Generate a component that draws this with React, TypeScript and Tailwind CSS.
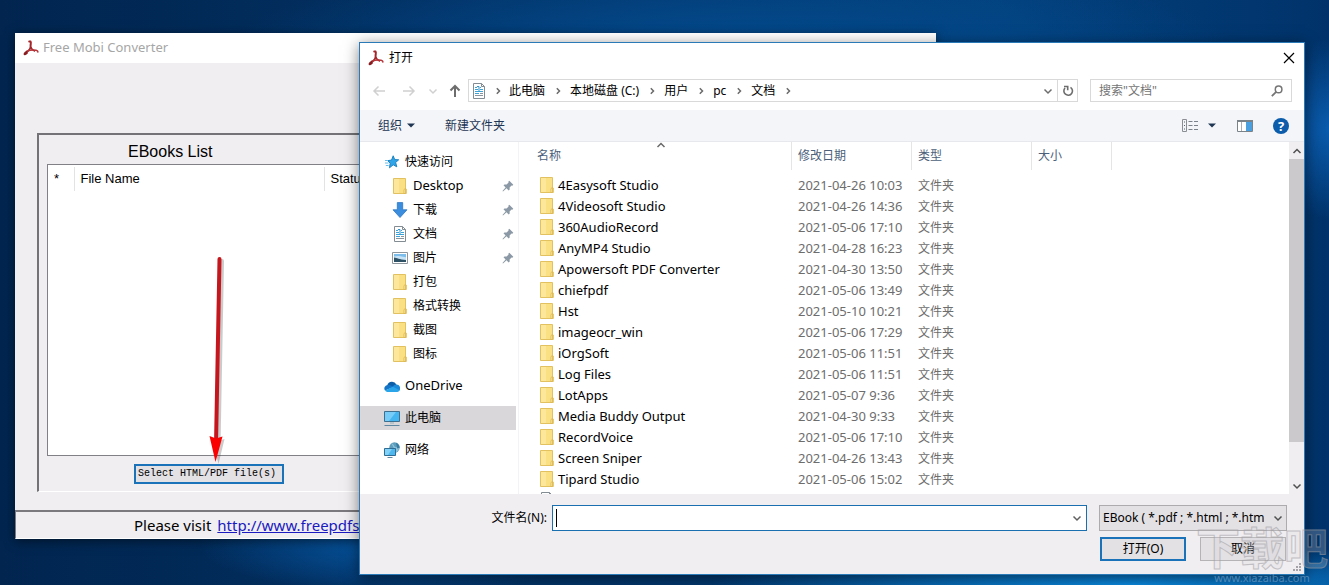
import React from "react";
import clsx from "clsx";

type IconProps = { className?: string };

type SideItem = {
  label: string;
  icon: (p: IconProps) => React.ReactElement;
  pinned?: boolean;
  latin?: boolean;
};

/* ---------- icons ---------- */

function PdfLogo({ className }: IconProps) {
  return (
    <svg viewBox="0 0 16 16" className={clsx("shrink-0", className)} fill="none" aria-hidden="true">
      <path d="M6.200 1.500h1.300c.8.900.2 2.500.1 3.700-.1 1 0 1.800.2 2.600" stroke="#a3262a" strokeWidth="2" strokeLinecap="round" />
      <path d="M7.700 7.300C7.200 9 5.500 10.800 4 12.200" stroke="#a3262a" strokeWidth="1.700" />
      <path d="M7.700 7.300c1 1.800 2.600 3.300 4.300 4" stroke="#a3262a" strokeWidth="1.700" />
      <path d="M4 11.200c2.500-1 6-1.500 9-.9 1.500.4 2 1 1.800 1.700" stroke="#b5353a" strokeWidth="1.500" strokeLinecap="round" />
      <path d="M4.300 11.400c-1.300.7-2.500 1.600-2.800 2.700.8.400 2-.4 2.900-1.600" stroke="#8a1c20" strokeWidth="1.900" strokeLinejoin="round" />
    </svg>
  );
}

function FolderIcon({ className }: IconProps) {
  return (
    <svg viewBox="0 0 14 16" className={clsx("shrink-0", className)} aria-hidden="true">
      <path d="M.5.5h12v10.500h.8v4.500H.5z" fill="#fbe083" stroke="#e2c160" />
      <path d="M1 1h5v14H1z" fill="#fde79a" />
      <path d="M11 15.500v-4l1.500-1v5z" fill="#fff0b5" stroke="#d9b44c" strokeWidth=".8" />
    </svg>
  );
}

function StarIcon({ className }: IconProps) {
  return (
    <svg viewBox="0 0 14 14" className={clsx("shrink-0", className)} aria-hidden="true">
      <path d="M8.200.800 9.700 4.600l4 .2-3.100 2.700 1.200 4.300-3.600-2-3.700 3 .700-4.600L2.800 5.700l3.800-.7z" fill="#2fa4e7" stroke="#1b83c4" strokeWidth="1" />
      <path d="M0 5.500h2.500M0 8h3.500M.8 10.500h2.800" stroke="#55b4ea" strokeWidth=".9" />
    </svg>
  );
}

function DownloadIcon({ className }: IconProps) {
  return (
    <svg viewBox="0 0 16 16" className={clsx("shrink-0", className)} aria-hidden="true">
      <path d="M5.300.600h5.400v7.200h4.300L8 15.500 1 7.800h4.300z" fill="#3b8ede" stroke="#2c76c4" strokeWidth=".8" />
    </svg>
  );
}

function DocumentIcon({ className }: IconProps) {
  return (
    <svg viewBox="0 0 14 16" className={clsx("shrink-0", className)} fill="none" aria-hidden="true">
      <path d="M1.500.5h8l3 3v12h-11z" fill="#fff" stroke="#838b93" />
      <path d="M9.500.5v3h3" stroke="#838b93" />
      <path d="M3 6.500h3M8 6.500h3M3 8.500h8M3 10.500h4" stroke="#3ba3d8" />
      <path d="M5 3.500h2v5" stroke="#2f93cc" />
      <path d="M3 4.500h2M8 4.500h1" stroke="#3ba3d8" />
      <path d="M8 10.500h3M3 12.500h8" stroke="#8a949c" />
    </svg>
  );
}

function PictureIcon({ className }: IconProps) {
  return (
    <svg viewBox="0 0 16 12" className={clsx("shrink-0", className)} aria-hidden="true">
      <path d="M.5.5h15v11H.5z" fill="#fff" stroke="#8d959d" />
      <path d="M2 2h12v8H2z" fill="#7dbdec" />
      <path d="M2 4.500c3-1 5-.5 12 .8V8H2z" fill="#c7e3f5" />
      <path d="M2 5.500c3 .4 5 2 12 2.500v2H2z" fill="#2e5166" />
    </svg>
  );
}

function OneDriveIcon({ className }: IconProps) {
  return (
    <svg viewBox="0 0 16 11" className={clsx("shrink-0", className)} aria-hidden="true">
      <path d="M3.300 4.200A4.900 4.900 0 0 1 12.400 3.500L9.500 8z" fill="#0c5ea8" />
      <path d="M3.400 4A3.500 3.500 0 0 0 1 9.500L9.800 6 6.200 4.200A4 4 0 0 0 3.400 4z" fill="#1475c8" />
      <path d="M12.300 3.600A3.700 3.700 0 0 1 15 10L8 6.500l1.500-1.800a4 4 0 0 1 2.800-1.100z" fill="#1a8ad8" />
      <path d="M1 9.600 8.800 5.800l6.800 3.500a2.700 2.700 0 0 1-2.300 1.600H3.300A3.300 3.300 0 0 1 1 9.600z" fill="#2aa5ea" />
    </svg>
  );
}

function ComputerIcon({ className }: IconProps) {
  return (
    <svg viewBox="0 0 16 15" className={clsx("shrink-0", className)} aria-hidden="true">
      <path d="M.5.5h15v10H.5z" fill="#45b5f2" stroke="#3f6f8f" />
      <path d="M1 1h11L5 10H1z" fill="#77cdf8" />
      <path d="M6 11h4v2H6z" fill="#b9c3ca" />
      <path d="M.5 14.500h15" stroke="#5f87a1" />
    </svg>
  );
}

function NetworkIcon({ className }: IconProps) {
  return (
    <svg viewBox="0 0 16 16" className={clsx("shrink-0", className)} aria-hidden="true">
      <circle cx="10.500" cy="5.500" r="5.200" fill="#5f9dbd" />
      <path d="M7.500 1.500c2.500.5 2 2.500 3.500 3.500s2-1 4-.5c0 3-1 5-3 5.800z" fill="#8fc3da" />
      <path d="M12 .800c2.200.9 3.500 2.700 3.600 4.900l-2.400.8z" fill="#377ca3" />
      <path d="M.5 6.500h11v7H.5z" fill="#4db7ee" stroke="#2f6d94" />
      <path d="M1 7h7l-4 6H1z" fill="#82d1f8" />
      <path d="M3.500 15.500h5" stroke="#5f87a1" />
    </svg>
  );
}

function PinIcon({ className }: IconProps) {
  return (
    <svg viewBox="0 0 12 12" className={clsx("shrink-0", className)} aria-hidden="true">
      <path d="m7.300.8 4 4-1 .9-.8-.3-1.900 2 .1 2.100-1 1L4.500 8.300 1 11.400l-.5-.4 3.100-3.500-2.100-2.200 1-.9 2.100.1 2-1.900-.3-.9z" fill="#8b98a5" />
    </svg>
  );
}

function Chevron({ dir, className }: { dir: "up" | "down" | "right"; className?: string }) {
  const d = { up: "M1.500 7 5 3.500 8.500 7", down: "M1.500 3.500 5 7l3.500-3.500", right: "M3.800 2.300 6.500 5 3.800 7.700" }[dir];
  return (
    <svg viewBox="0 0 10 10" className={clsx("h-[10px] w-[10px] shrink-0", className)} fill="none" aria-hidden="true">
      <path d={d} stroke="currentColor" strokeWidth="1.500" />
    </svg>
  );
}

function ArrowIcon({ dir, className }: { dir: "left" | "right" | "up"; className?: string }) {
  const d = {
    left: "M13 7H2M6.500 2.500 2 7l4.500 4.500",
    right: "M1 7h11M7.500 2.500 12 7l-4.500 4.500",
    up: "M7 13V2M2.500 6.500 7 2l4.500 4.500",
  }[dir];
  return (
    <svg viewBox="0 0 14 14" className={clsx("h-[14px] w-[14px]", className)} fill="none" aria-hidden="true">
      <path d={d} stroke="currentColor" strokeWidth={dir === "up" ? 2 : 1.5} />
    </svg>
  );
}

function Caret() {
  return (
    <svg viewBox="0 0 8 5" className="h-[5px] w-[8px]" aria-hidden="true">
      <path d="M0 .5h8l-4 4z" fill="#1e3553" />
    </svg>
  );
}

/* ---------- data ---------- */

const quickAccess: SideItem[] = [
  { label: "Desktop", icon: FolderIcon, pinned: true, latin: true },
  { label: "下载", icon: DownloadIcon, pinned: true },
  { label: "文档", icon: DocumentIcon, pinned: true },
  { label: "图片", icon: PictureIcon, pinned: true },
  { label: "打包", icon: FolderIcon },
  { label: "格式转换", icon: FolderIcon },
  { label: "截图", icon: FolderIcon },
  { label: "图标", icon: FolderIcon },
];

const places: SideItem[] = [
  { label: "OneDrive", icon: OneDriveIcon, latin: true },
  { label: "此电脑", icon: ComputerIcon },
  { label: "网络", icon: NetworkIcon },
];

const crumbs = ["此电脑", "本地磁盘 (C:)", "用户", "pc", "文档"];

const files: [string, string][] = [
  ["4Easysoft Studio", "2021-04-26 10:03"],
  ["4Videosoft Studio", "2021-04-26 14:36"],
  ["360AudioRecord", "2021-05-06 17:10"],
  ["AnyMP4 Studio", "2021-04-28 16:23"],
  ["Apowersoft PDF Converter", "2021-04-30 13:50"],
  ["chiefpdf", "2021-05-06 13:49"],
  ["Hst", "2021-05-10 10:21"],
  ["imageocr_win", "2021-05-06 17:29"],
  ["iOrgSoft", "2021-05-06 11:51"],
  ["Log Files", "2021-05-06 11:51"],
  ["LotApps", "2021-05-07 9:36"],
  ["Media Buddy Output", "2021-04-30 9:33"],
  ["RecordVoice", "2021-05-06 17:10"],
  ["Screen Sniper", "2021-04-26 13:43"],
  ["Tipard Studio", "2021-05-06 15:02"],
];

/* ---------- converter window ---------- */

function ConverterWindow() {
  return (
    <section className="absolute top-[33px] right-[393px] left-[15px] flex flex-col bg-[#f0eef1] shadow-[0_2px_10px_rgba(0,0,0,0.5)]">
      <header className="flex h-[30px] items-center gap-1 bg-white pl-2 text-[13px] text-[#a6a6a6]">
        <PdfLogo className="h-4 w-4" />
        <h1>Free Mobi Converter</h1>
      </header>

      <div className="mt-[70px] mr-5 ml-[22px] flex flex-col border-t-2 border-r border-b border-l-2 border-t-[#747276] border-r-white border-b-white border-l-[#747276] pr-2 pb-[7px] pl-2 font-['Liberation_Sans',sans-serif]">
        <h2 className="pt-1 pl-[81px] text-[16px] leading-[25px] text-black">EBooks List</h2>
        <div className="h-[292px] border border-[#828087] bg-white pt-[2px]">
          <table className="w-full table-fixed text-left text-[13px] text-black">
            <colgroup>
              <col className="w-[26px]" />
              <col className="w-[250px]" />
              <col />
            </colgroup>
            <thead>
              <tr className="h-6">
                <th className="border-r border-[#e3e3e3] pl-[6px] font-normal">*</th>
                <th className="border-r border-[#e3e3e3] pl-[6px] font-normal">File Name</th>
                <th className="pl-[6px] font-normal">Status</th>
              </tr>
            </thead>
          </table>
        </div>
        <button className="mt-2 ml-[87px] h-5 w-[150px] border-2 border-[#1a72b8] bg-[#e3e1e4] text-left font-['Liberation_Mono',monospace] text-[10px] leading-4 whitespace-nowrap text-black">
          <span className="pl-[2px]">Select HTML/PDF file(s)</span>
        </button>
      </div>

      <footer className="mt-[18px] flex h-[29px] items-center gap-1.5 border-t-2 border-b border-l border-t-[#7b797d] border-b-white border-l-[#7b797d] pl-[118px] text-[15px] text-black">
        <span>Please visit</span>
        <a href="#" className="text-[#1a1ac0] underline">http://www.freepdfsolutions.com</a>
      </footer>
    </section>
  );
}

function RedArrow() {
  return (
    <svg viewBox="0 0 30 212" className="absolute top-[254px] left-[202px] h-[212px] w-[30px]" aria-hidden="true">
      <g opacity=".25" transform="translate(2.500 2)">
        <path d="M17.500 5 14 190" stroke="#333" strokeWidth="4" strokeLinecap="round" />
        <path d="M8 183l6 2 6-2-6 25z" fill="#333" />
      </g>
      <path d="M17.500 5 14 190" stroke="#c4161c" strokeWidth="4" strokeLinecap="round" />
      <path d="M7.500 182l6.500 2.500 6.500-2L13.500 208z" fill="#fb0000" />
    </svg>
  );
}

/* ---------- open dialog ---------- */

function AddressRow() {
  return (
    <div className="flex h-[37px] items-center pr-3 pb-[2px]">
      <nav className="flex w-[108px] shrink-0 items-center pl-3 text-[#d0d0d0]">
        <button aria-label="后退"><ArrowIcon dir="left" /></button>
        <button aria-label="前进" className="ml-4"><ArrowIcon dir="right" /></button>
        <button aria-label="最近" className="ml-3"><Chevron dir="down" className="h-2 w-2" /></button>
        <button aria-label="上移" className="ml-2.5 text-[#6d6d6d]"><ArrowIcon dir="up" /></button>
      </nav>
      <div className="flex h-[23px] flex-1 items-center border border-[#d9d9d9] pl-[3px] text-black">
        <DocumentIcon className="h-4 w-[14px]" />
        <span className="flex w-[23px] justify-center text-[#6a6a6a]"><Chevron dir="right" /></span>
        {crumbs.map((c) => (
          <React.Fragment key={c}>
            <button className="whitespace-nowrap">{c}</button>
            <span className="flex w-[25px] shrink-0 justify-center text-[#6a6a6a]"><Chevron dir="right" /></span>
          </React.Fragment>
        ))}
        <button aria-label="以前的位置" className="mr-1 ml-auto text-[#6d6d6d]"><Chevron dir="down" /></button>
        <button aria-label="刷新" className="flex h-full w-5 items-center justify-center border-l border-[#d9d9d9] text-[#6d6d6d]">
          <svg viewBox="0 0 12 12" className="h-3 w-3" fill="none" aria-hidden="true">
            <path d="M8.500 2.300A4.300 4.300 0 1 1 3 3M2 1.500h3.700v3.700" stroke="currentColor" strokeWidth="1.600" />
          </svg>
        </button>
      </div>
      <label className="ml-3 flex h-[23px] w-[202px] items-center border border-[#d9d9d9] px-2 text-[#757575]">
        <input aria-label="搜索" placeholder={'搜索"文档"'} className="w-full min-w-0 bg-transparent outline-none placeholder:text-[#757575]" />
        <svg viewBox="0 0 12 12" className="h-3 w-3 shrink-0" fill="none" aria-hidden="true">
          <circle cx="7.600" cy="4.400" r="3.300" stroke="currentColor" strokeWidth="1.500" />
          <path d="M5.200 6.800.8 11.200" stroke="currentColor" strokeWidth="1.800" />
        </svg>
      </label>
    </div>
  );
}

function Toolbar() {
  return (
    <div className="flex h-8 items-center border-b border-[#e6e8ee] bg-[#f4f5f9] pr-[15px] pl-[18px] text-[#1e3553]">
      <button className="flex items-center gap-[5px]">组织 <Caret /></button>
      <button className="ml-[30px]">新建文件夹</button>
      <div className="ml-auto flex items-center">
        <button aria-label="更改视图">
          <svg viewBox="0 0 16 14" className="h-[14px] w-4" fill="none" aria-hidden="true">
            <path d="M.5.5h4v12h-4z" stroke="#8a8f96" />
            <path d="M2 3h1M2 6.500h1M2 10h1" stroke="#55606c" />
            <path d="M6.500 2.500h4M12 2.500h4M6.500 6.500h4M12 6.500h4M6.500 10.500h4M12 10.500h4" stroke="#7b828a" />
          </svg>
        </button>
        <button aria-label="更多选项" className="ml-[10px]"><Caret /></button>
        <button aria-label="预览窗格" className="ml-[21px]">
          <svg viewBox="0 0 16 12" className="h-3 w-4" aria-hidden="true">
            <path d="M.5.5h15v11H.5z" fill="#fff" stroke="#7a828a" />
            <path d="M0 0h16v2H0z" fill="#7a828a" />
            <path d="M4.500 2v9" stroke="#a8aeb4" />
            <path d="M9 2h6v9H9z" fill="#4a9fe0" />
          </svg>
        </button>
        <button aria-label="帮助" className="ml-5 flex h-4 w-4 items-center justify-center rounded-full bg-[#0b5cab] text-[13px] leading-4 font-bold text-white">
          ?
        </button>
      </div>
    </div>
  );
}

function iconSize(item: SideItem) {
  if (item.icon === PictureIcon) return "h-3 w-4";
  if (item.icon === OneDriveIcon) return "h-[11px] w-4";
  if (item.icon === ComputerIcon) return "h-[15px] w-4";
  if (item.icon === StarIcon) return "h-[14px] w-[14px]";
  if (item.icon === FolderIcon || item.icon === DocumentIcon) return "h-4 w-[14px]";
  return "h-4 w-4";
}

function SideRow({ item, nested, active }: { item: SideItem; nested?: boolean; active?: boolean }) {
  const Icon = item.icon;
  return (
    <li>
      <button
        className={clsx(
          "flex h-6 w-full items-center gap-1 pr-[2px] text-left text-black",
          nested ? "pl-8" : "pl-6",
          active && "bg-[#d9d7da]",
        )}
      >
        <span className="flex w-4 justify-center">
          <Icon className={iconSize(item)} />
        </span>
        <span className={clsx("flex-1 pl-px", item.latin && "text-[13px]")}>{item.label}</span>
        {item.pinned && <PinIcon className="h-3 w-3" />}
      </button>
    </li>
  );
}

function Sidebar() {
  return (
    <aside className="w-[159px] shrink-0 border-r border-[#f3f3f5] pt-2 pr-[2px]">
      <ul>
        <SideRow item={{ label: "快速访问", icon: StarIcon }} />
        {quickAccess.map((i) => (
          <SideRow key={i.label} item={i} nested />
        ))}
      </ul>
      <ul className="flex flex-col gap-2 pt-2">
        {places.map((i) => (
          <SideRow key={i.label} item={i} active={i.label === "此电脑"} />
        ))}
      </ul>
    </aside>
  );
}

function FileTable() {
  return (
    <div className="relative min-w-0 flex-1 overflow-hidden">
      <Chevron dir="up" className="absolute top-[-2px] left-[137px] text-[#6a6a6a]" />
      <table className="w-[593px] table-fixed text-left text-[#6d6d6d]">
        <colgroup>
          <col className="w-[273px]" />
          <col className="w-[120px]" />
          <col className="w-[120px]" />
          <col className="w-[80px]" />
        </colgroup>
        <thead>
          <tr className="text-[#4c607a]">
            {["名称", "修改日期", "类型", "大小"].map((h, i) => (
              <th key={h} className="pb-1 font-normal">
                <div className={clsx("flex h-7 items-center border-r border-[#e5e5e5]", i === 0 ? "pl-[18px]" : "pl-[6px]")}>{h}</div>
              </th>
            ))}
          </tr>
        </thead>
        <tbody>
          {files.map(([name, date]) => (
            <tr key={name} className="h-[21px]">
              <td className="pl-[21px] text-black">
                <div className="flex items-center gap-1 text-[13px] leading-5">
                  <FolderIcon className="h-4 w-[14px]" />
                  {name}
                </div>
              </td>
              <td className="pl-[6px] text-[13px] leading-5">{date}</td>
              <td className="pt-[2px] pl-[6px]">文件夹</td>
              <td />
            </tr>
          ))}
          <tr>
            <td className="pt-[3px] pl-[21px]"><DocumentIcon className="h-4 w-[14px]" /></td>
          </tr>
        </tbody>
      </table>
    </div>
  );
}

function SizeGrip() {
  return (
    <svg viewBox="0 0 8 8" className="absolute right-[3px] bottom-[3px] h-2 w-2" fill="#a5a3a7" aria-hidden="true">
      <path d="M6 0h2v2H6zM3 3h2v2H3zM6 3h2v2H6zM0 6h2v2H0zM3 6h2v2H3zM6 6h2v2H6z" />
    </svg>
  );
}

function OpenDialog() {
  return (
    <section className="absolute top-[42px] right-6 left-[359px] border border-[#2a7ab8] bg-white text-[12px] shadow-[0_3px_14px_rgba(0,0,0,0.5)]">
      <header className="flex h-[30px] items-center gap-[5px] pr-[9px] pl-2">
        <PdfLogo className="h-4 w-4" />
        <h2 className="text-black">打开</h2>
        <button aria-label="关闭" className="ml-auto">
          <svg viewBox="0 0 12 12" className="h-3 w-3" aria-hidden="true">
            <path d="m1 1 10 10M11 1 1 11" stroke="#000" strokeWidth="1.200" />
          </svg>
        </button>
      </header>
      <AddressRow />
      <Toolbar />

      <div className="flex h-[352px] bg-white">
        <Sidebar />
        <FileTable />
        <div className="flex w-[15px] shrink-0 flex-col items-center bg-[#f0eef1] text-[#505050]">
          <div className="flex h-[17px] items-center"><Chevron dir="up" /></div>
          <div className="h-[283px] w-full bg-[#cbc9cc]" />
          <div className="mt-auto flex h-[17px] items-center"><Chevron dir="down" /></div>
        </div>
      </div>

      <footer className="bg-[#f0eef1] pt-[11px] pr-[17px] pb-[13px] text-black">
        <div className="flex items-center">
          <label htmlFor="file-name" className="w-[187px] text-right">文件名(N):</label>
          <div className="ml-[5px] flex h-[26px] flex-1 items-center border border-[#1a6fb0] bg-white pr-1">
            <span className="ml-[3px] h-[18px] w-px bg-black" />
            <input id="file-name" className="h-full min-w-0 flex-1 bg-transparent outline-none" />
            <Chevron dir="down" className="text-[#606060]" />
          </div>
          <div className="relative ml-3 w-[188px]">
            <select aria-label="文件类型" className="h-[26px] w-full appearance-none border border-[#adabae] bg-[#e3e1e4] pr-4 pl-[3px]">
              <option>EBook ( *.pdf ; *.html ; *.htm</option>
            </select>
            <Chevron dir="down" className="pointer-events-none absolute top-2 right-1 text-[#505050]" />
          </div>
        </div>
        <div className="mt-[6px] flex justify-end gap-[14px] pr-px">
          <button className="h-6 w-[86px] border-2 border-[#1a72b8] bg-[#e3e1e4]">打开(O)</button>
          <button className="h-6 w-[86px] border border-[#b5b3b6] bg-[#e3e1e4]">取消</button>
        </div>
      </footer>
      <SizeGrip />
    </section>
  );
}

function Watermark() {
  return (
    <div className="pointer-events-none absolute right-0 bottom-0 w-[134px] text-center opacity-60">
      <div className="text-[44px] leading-[46px] font-bold whitespace-nowrap text-[#d8d6da]/40 [-webkit-text-stroke:1px_#a3a1a6]">下载吧</div>
      <div className="text-[11px] leading-[14px] text-[#7fa6c9]">www.xiazaiba.com</div>
    </div>
  );
}

export default function App() {
  return (
    <main className="relative h-screen overflow-hidden bg-[#02376f] bg-[radial-gradient(ellipse_420px_40px_at_85%_100%,#0b8ae0,transparent),radial-gradient(ellipse_70px_90px_at_100%_22%,#0a5cae,transparent),radial-gradient(ellipse_200px_50px_at_30%_93%,#0657a3,transparent),radial-gradient(ellipse_500px_90px_at_55%_8%,#044c90,transparent),linear-gradient(90deg,#01254f_0%,#022f60_30%,#02407c_75%,#01336a_100%)] font-['Noto_Sans','Noto_Sans_CJK_SC',sans-serif]">
      <ConverterWindow />
      <RedArrow />
      <OpenDialog />
      <Watermark />
    </main>
  );
}
